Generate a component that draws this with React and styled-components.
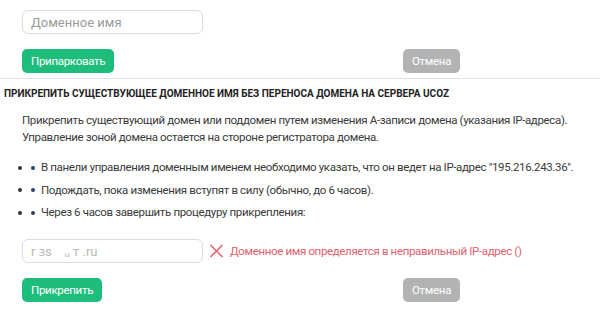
import styled, { createGlobalStyle } from 'styled-components';

const GlobalStyle = createGlobalStyle`
  body {
    margin: 0;
    background: #fff;
    font-family: Roboto, "Noto Sans", sans-serif;
    color: #333;
  }
`;

const steps = [
  'В панели управления доменным именем необходимо указать, что он ведет на IP-адрес "195.216.243.36".',
  'Подождать, пока изменения вступят в силу (обычно, до 6 часов).',
  'Через 6 часов завершить процедуру прикрепления:',
];

export default function App() {
  return (
    <Page>
      <GlobalStyle />
      <Section>
        <Field placeholder="Доменное имя" />
        <Actions>
          <Button>Припарковать</Button>
          <Button $variant="cancel">Отмена</Button>
        </Actions>
      </Section>

      <Divider />

      <Title>Прикрепить существующее доменное имя без переноса домена на сервера uCoz</Title>

      <Section>
        <Lead>
          Прикрепить существующий домен или поддомен путем изменения А-записи домена (указания IP-адреса).
          <br />
          Управление зоной домена остается на стороне регистратора домена.
        </Lead>
        <Steps>
          {steps.map((s) => (
            <Step key={s}>
              <Dot />
              <Dot $blue />
              <span>{s}</span>
            </Step>
          ))}
        </Steps>

        <FieldRow>
          <Field defaultValue="r ɜs    ᵤ т .ru" $muted />
          <ErrorText>
            <svg width="15" height="14" viewBox="0 0 15 14">
              <path d="M1.5 1 L13.5 13 M13.5 1 L1.5 13" stroke="#e0616d" strokeWidth="1.5" fill="none" />
            </svg>
            Доменное имя определяется в неправильный IP-адрес ()
          </ErrorText>
        </FieldRow>
        <Actions>
          <Button>Прикрепить</Button>
          <Button $variant="cancel">Отмена</Button>
        </Actions>
      </Section>
    </Page>
  );
}

const Page = styled.div`
  width: 600px;
  padding-top: 10px;
`;

const Section = styled.div`
  padding: 0 22px;
`;

const Field = styled.input`
  box-sizing: border-box;
  width: 181px;
  height: 24px;
  padding: 0 8px;
  border: 1px solid #dcdcdc;
  border-radius: 6px;
  font-family: inherit;
  font-size: 13px;
  color: ${(p) => (p.$muted ? '#b8b8b8' : '#333')};
  outline: none;

  &::placeholder {
    color: #9a9a9a;
  }
`;

const Actions = styled.div`
  display: grid;
  grid-template-columns: 381px auto;
  align-items: center;
  margin-top: 15px;
`;

const Button = styled.button`
  justify-self: start;
  height: 24px;
  padding: 0 9px;
  border: none;
  border-radius: 5px;
  background: ${(p) => (p.$variant === 'cancel' ? '#b3b3b3' : '#1ebd7c')};
  color: #fff;
  font-family: inherit;
  font-size: 11.5px;
  letter-spacing: -0.3px;
`;

const Divider = styled.hr`
  margin: 5px 0 0;
  border: none;
  border-top: 1px solid #e2e2e2;
`;

const Title = styled.h3`
  margin: 8px 0 0 4px;
  font-size: 10px;
  line-height: 14px;
  font-weight: 700;
  text-transform: uppercase;
  color: #222;
`;

const Lead = styled.p`
  margin: 11px 0 0;
  font-size: 11.5px;
  line-height: 17px;
  letter-spacing: -0.35px;
  color: #3a3a3a;
`;

const Steps = styled.ul`
  margin: 13px 0 0 -4px;
  padding: 0;
  list-style: none;
  display: flex;
  flex-direction: column;
  gap: 5.5px;
`;

const Step = styled.li`
  display: flex;
  align-items: center;
  font-size: 11.5px;
  line-height: 17px;
  letter-spacing: -0.35px;
  color: #3a3a3a;
`;

const Dot = styled.i`
  width: 4px;
  height: 4px;
  border-radius: 50%;
  background: ${(p) => (p.$blue ? '#2b3d6b' : '#333')};
  margin-right: ${(p) => (p.$blue ? '6px' : '9px')};
`;

const FieldRow = styled.div`
  display: flex;
  align-items: center;
  gap: 6px;
  margin-top: 18px;
`;

const ErrorText = styled.span`
  display: flex;
  align-items: center;
  gap: 6px;
  font-size: 11.5px;
  letter-spacing: -0.35px;
  color: #e0616d;
`;
